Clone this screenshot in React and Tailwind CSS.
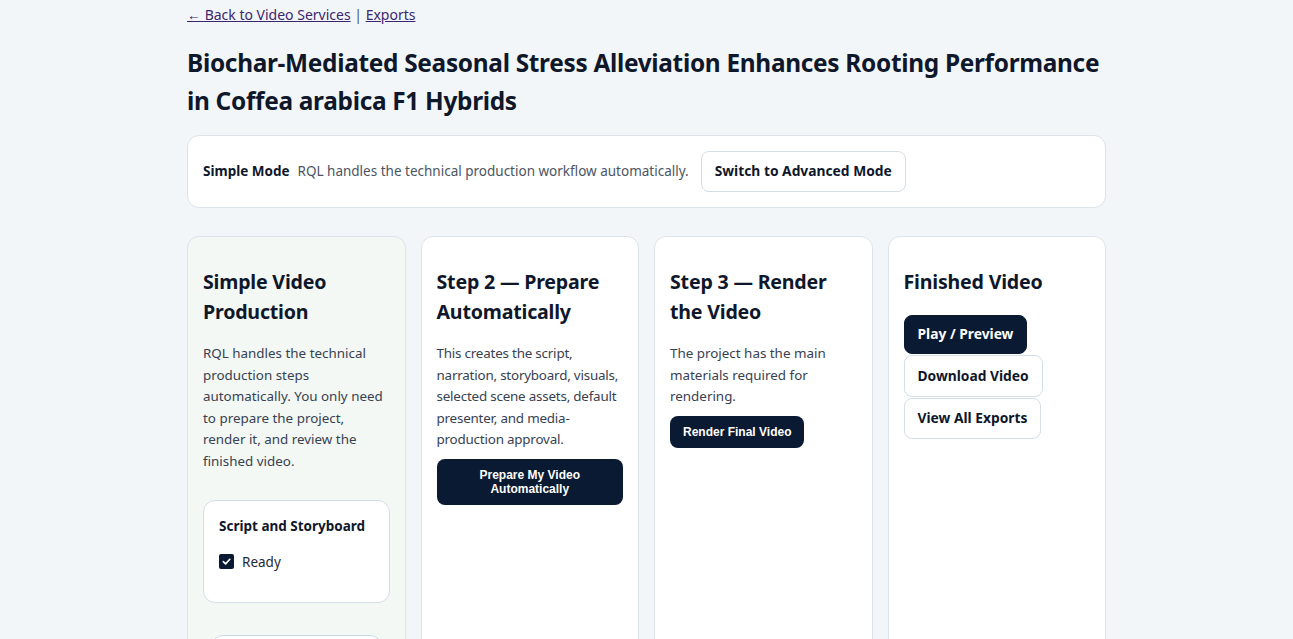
import React from 'react';

const font = { fontFamily: '"Noto Sans", "Open Sans", sans-serif' };

function Card({ tint, children }) {
  return (
    <section
      className={`rounded-xl border border-[#dde3ea] px-[15px] pt-[30px] pb-6 min-h-[420px] ${tint ? 'bg-[#f3f8f5]' : 'bg-white'}`}
    >
      {children}
    </section>
  );
}

function CardTitle({ children }) {
  return <h2 className="text-[19.6px] font-bold leading-[30px] text-[#0f172a] tracking-[-0.2px]">{children}</h2>;
}

function CardText({ tight, children }) {
  return (
    <p className={`mt-4 text-[13.4px] leading-[21.6px] text-[#374151] ${tight ? 'tracking-[-0.2px]' : ''}`}>
      {children}
    </p>
  );
}

export default function App() {
  return (
    <div className="min-h-screen bg-[#f3f6f9] text-[#0f172a]" style={font}>
      <div className="w-[919px] mx-auto pt-[5px]">
        <nav className="text-[14px] leading-[20px] text-[#3d2670]">
          <a href="#" className="underline">← Back to Video Services</a>
          <span className="text-[#4b5563]"> | </span>
          <a href="#" className="underline">Exports</a>
        </nav>

        <h1 className="mt-[19px] text-[24.4px] font-bold leading-[38px] text-[#0f172a] tracking-[-0.3px]">
          Biochar-Mediated Seasonal Stress Alleviation Enhances Rooting Performance in Coffea arabica F1 Hybrids
        </h1>

        <div className="mt-[15px] h-[73px] rounded-xl border border-[#dde3ea] bg-white px-[15px] flex items-center text-[13.5px]">
          <span className="font-bold text-[#0f172a]">Simple Mode</span>
          <span className="ml-2 text-[#4b5563]">RQL handles the technical production workflow automatically.</span>
          <button className="ml-[12px] h-[41px] px-[13px] rounded-lg border border-[#d5dde6] bg-white text-[13.8px] font-bold text-[#0f172a]">
            Switch to Advanced Mode
          </button>
        </div>

        <div className="mt-[28px] grid grid-cols-4 gap-[15px]">
          <Card tint>
            <CardTitle>Simple Video Production</CardTitle>
            <CardText>
              RQL handles the technical production steps automatically. You only need to prepare the project, render it, and review the finished video.
            </CardText>
            <div className="mt-[27px] rounded-xl border border-[#d5dde6] bg-white px-[15px] pt-[15px] pb-[30px]">
              <h3 className="text-[13.5px] font-bold leading-[20px] text-[#0f172a]">Script and Storyboard</h3>
              <label className="mt-[16px] flex items-center gap-[8px] text-[13.5px] text-[#1f2937]">
                <span className="w-[15px] h-[15px] rounded-[2px] bg-[#0b1a33] flex items-center justify-center">
                  <svg viewBox="0 0 12 12" className="w-[11px] h-[11px]">
                    <path d="M2.5 6.2 L5 8.6 L9.6 3.6" fill="none" stroke="white" strokeWidth="1.8" strokeLinecap="round" strokeLinejoin="round" />
                  </svg>
                </span>
                Ready
              </label>
            </div>
            <div className="mt-[32px] h-[60px] rounded-xl border border-[#c9d8e6] bg-white mx-[8px]" />
          </Card>

          <Card>
            <CardTitle>Step 2 — Prepare Automatically</CardTitle>
            <CardText tight>
              This creates the script, narration, storyboard, visuals, selected scene assets, default presenter, and media-production approval.
            </CardText>
            <button
              className="mt-[8px] w-full h-[46px] rounded-lg bg-[#0b1a33] text-white text-[12px] font-bold leading-[14px]"
              style={{ fontFamily: '"Liberation Sans", Arial, sans-serif' }}
            >
              Prepare My Video<br />Automatically
            </button>
          </Card>

          <Card>
            <CardTitle>Step 3 — Render the Video</CardTitle>
            <CardText>The project has the main materials required for rendering.</CardText>
            <button
              className="mt-[8px] h-[32px] px-[13px] rounded-lg bg-[#0b1a33] text-white text-[12px] font-bold"
              style={{ fontFamily: '"Liberation Sans", Arial, sans-serif' }}
            >
              Render Final Video
            </button>
          </Card>

          <Card>
            <CardTitle>Finished Video</CardTitle>
            <div className="mt-[18px] flex flex-col items-start gap-[1px]">
              <button className="h-[39px] px-[13px] rounded-lg border border-[#0b1a33] bg-[#0b1a33] text-white text-[13.8px] font-bold">
                Play / Preview
              </button>
              <button className="h-[42px] px-[13px] rounded-lg border border-[#d5dde6] bg-white text-[#0f172a] text-[13.8px] font-bold">
                Download Video
              </button>
              <button className="h-[41px] px-[13px] rounded-lg border border-[#d5dde6] bg-white text-[#0f172a] text-[13.8px] font-bold">
                View All Exports
              </button>
            </div>
          </Card>
        </div>
      </div>
    </div>
  );
}
